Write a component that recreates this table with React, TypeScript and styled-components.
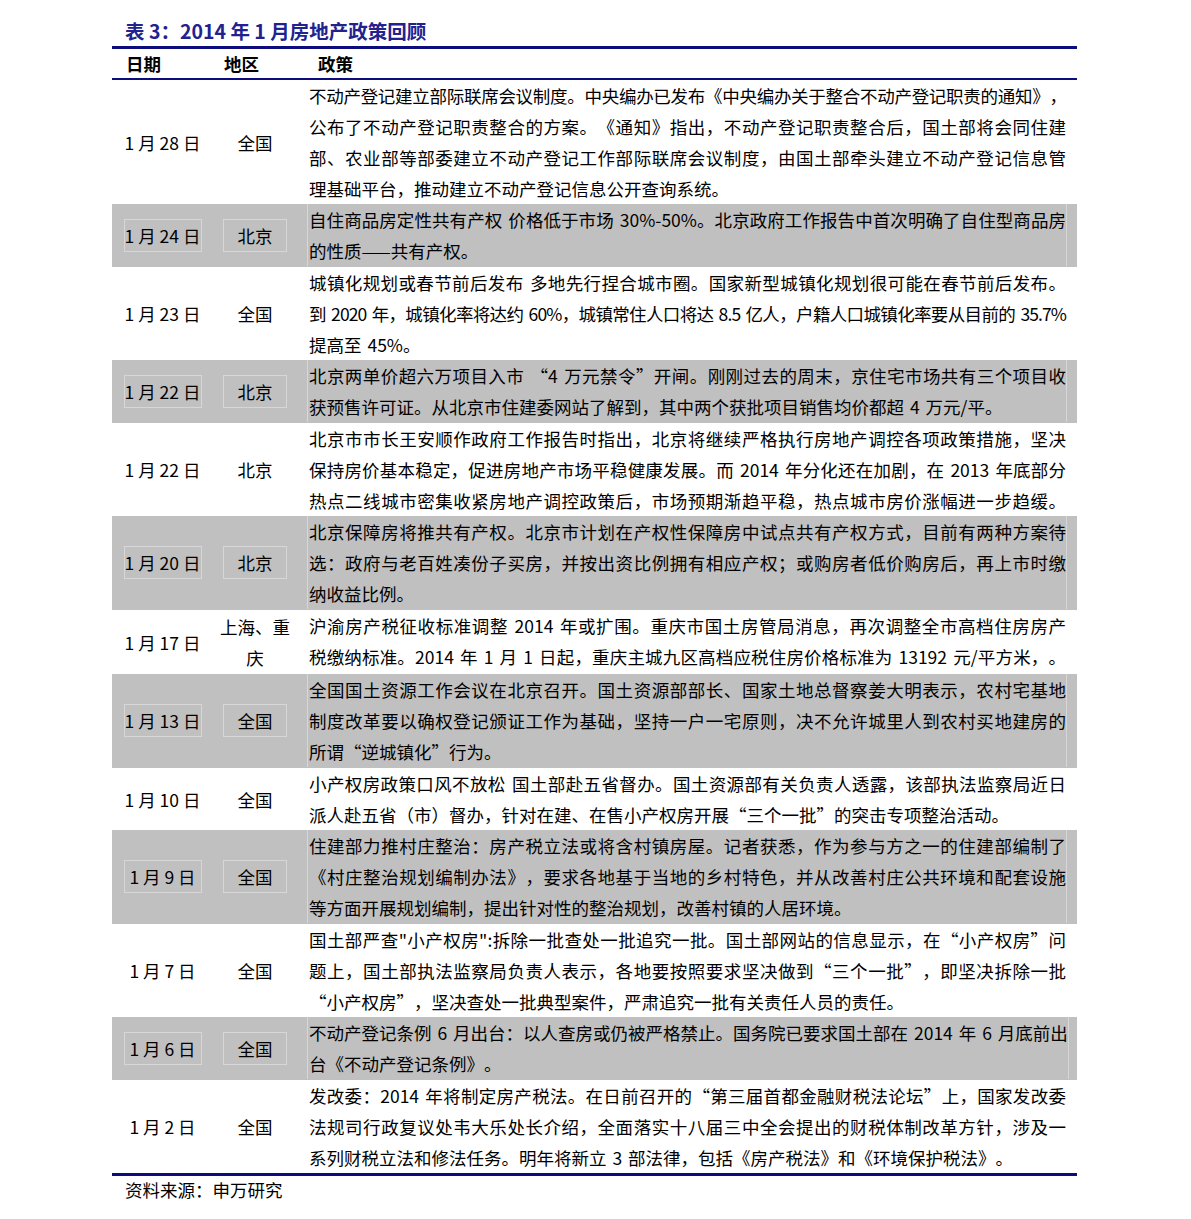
import React from 'react';
import styled, { createGlobalStyle, css } from 'styled-components';

type PolicyLine = { text: string; last?: boolean; tight?: boolean };
type Row = { date: string; region: React.ReactNode; shade?: boolean; lines: PolicyLine[] };

const navy = '#0c0c7c';

const rows: Row[] = [
  {
    date: '1 月 28 日',
    region: '全国',
    lines: [
      { text: '不动产登记建立部际联席会议制度。中央编办已发布《中央编办关于整合不动产登记职责的通知》，', tight: true },
      { text: '公布了不动产登记职责整合的方案。《通知》指出，不动产登记职责整合后，国土部将会同住建' },
      { text: '部、农业部等部委建立不动产登记工作部际联席会议制度，由国土部牵头建立不动产登记信息管' },
      { text: '理基础平台，推动建立不动产登记信息公开查询系统。', last: true },
    ],
  },
  {
    date: '1 月 24 日',
    region: '北京',
    shade: true,
    lines: [
      { text: '自住商品房定性共有产权 价格低于市场 30%-50%。北京政府工作报告中首次明确了自住型商品房' },
      { text: '的性质——共有产权。', last: true },
    ],
  },
  {
    date: '1 月 23 日',
    region: '全国',
    lines: [
      { text: '城镇化规划或春节前后发布 多地先行捏合城市圈。国家新型城镇化规划很可能在春节前后发布。' },
      { text: '到 2020 年，城镇化率将达约 60%，城镇常住人口将达 8.5 亿人，户籍人口城镇化率要从目前的 35.7%', tight: true },
      { text: '提高至 45%。', last: true },
    ],
  },
  {
    date: '1 月 22 日',
    region: '北京',
    shade: true,
    lines: [
      { text: '北京两单价超六万项目入市 “4 万元禁令”开闸。刚刚过去的周末，京住宅市场共有三个项目收' },
      { text: '获预售许可证。从北京市住建委网站了解到，其中两个获批项目销售均价都超 4 万元/平。', last: true },
    ],
  },
  {
    date: '1 月 22 日',
    region: '北京',
    lines: [
      { text: '北京市市长王安顺作政府工作报告时指出，北京将继续严格执行房地产调控各项政策措施，坚决' },
      { text: '保持房价基本稳定，促进房地产市场平稳健康发展。而 2014 年分化还在加剧，在 2013 年底部分' },
      { text: '热点二线城市密集收紧房地产调控政策后，市场预期渐趋平稳，热点城市房价涨幅进一步趋缓。' },
    ],
  },
  {
    date: '1 月 20 日',
    region: '北京',
    shade: true,
    lines: [
      { text: '北京保障房将推共有产权。北京市计划在产权性保障房中试点共有产权方式，目前有两种方案待' },
      { text: '选：政府与老百姓凑份子买房，并按出资比例拥有相应产权；或购房者低价购房后，再上市时缴' },
      { text: '纳收益比例。', last: true },
    ],
  },
  {
    date: '1 月 17 日',
    region: (
      <>
        上海、重
        <br />
        庆
      </>
    ),
    lines: [
      { text: '沪渝房产税征收标准调整 2014 年或扩围。重庆市国土房管局消息，再次调整全市高档住房房产' },
      { text: '税缴纳标准。2014 年 1 月 1 日起，重庆主城九区高档应税住房价格标准为 13192 元/平方米，。' },
    ],
  },
  {
    date: '1 月 13 日',
    region: '全国',
    shade: true,
    lines: [
      { text: '全国国土资源工作会议在北京召开。国土资源部部长、国家土地总督察姜大明表示，农村宅基地' },
      { text: '制度改革要以确权登记颁证工作为基础，坚持一户一宅原则，决不允许城里人到农村买地建房的' },
      { text: '所谓“逆城镇化”行为。', last: true },
    ],
  },
  {
    date: '1 月 10 日',
    region: '全国',
    lines: [
      { text: '小产权房政策口风不放松 国土部赴五省督办。国土资源部有关负责人透露，该部执法监察局近日' },
      { text: '派人赴五省（市）督办，针对在建、在售小产权房开展“三个一批”的突击专项整治活动。', last: true },
    ],
  },
  {
    date: '1 月 9 日',
    region: '全国',
    shade: true,
    lines: [
      { text: '住建部力推村庄整治：房产税立法或将含村镇房屋。记者获悉，作为参与方之一的住建部编制了' },
      { text: '《村庄整治规划编制办法》，要求各地基于当地的乡村特色，并从改善村庄公共环境和配套设施' },
      { text: '等方面开展规划编制，提出针对性的整治规划，改善村镇的人居环境。', last: true },
    ],
  },
  {
    date: '1 月 7 日',
    region: '全国',
    lines: [
      { text: '国土部严查"小产权房":拆除一批查处一批追究一批。国土部网站的信息显示，在“小产权房”问' },
      { text: '题上，国土部执法监察局负责人表示，各地要按照要求坚决做到“三个一批”，即坚决拆除一批' },
      { text: '“小产权房”，坚决查处一批典型案件，严肃追究一批有关责任人员的责任。', last: true },
    ],
  },
  {
    date: '1 月 6 日',
    region: '全国',
    shade: true,
    lines: [
      { text: '不动产登记条例 6 月出台：以人查房或仍被严格禁止。国务院已要求国土部在 2014 年 6 月底前出' },
      { text: '台《不动产登记条例》。', last: true },
    ],
  },
  {
    date: '1 月 2 日',
    region: '全国',
    lines: [
      { text: '发改委：2014 年将制定房产税法。在日前召开的“第三届首都金融财税法论坛”上，国家发改委' },
      { text: '法规司行政复议处韦大乐处长介绍，全面落实十八届三中全会提出的财税体制改革方针，涉及一' },
      { text: '系列财税立法和修法任务。明年将新立 3 部法律，包括《房产税法》和《环境保护税法》。', last: true },
    ],
  },
];

const GlobalStyle = createGlobalStyle`
  body {
    margin: 0;
    background: #fff;
    color: #000;
    font-family: "Noto Sans CJK SC", "Liberation Sans", sans-serif;
    text-spacing-trim: space-all;
  }
`;

const Page = styled.div`
  width: 965px;
  padding: 15px 0 20px 112px;
`;

const Title = styled.h1`
  margin: 0;
  padding-left: 13px;
  height: 31px;
  line-height: 31px;
  font-size: 19.5px;
  font-weight: 700;
  color: #22228f;
`;

const Table = styled.div`
  border-top: 3px solid ${navy};
  border-bottom: 3px solid ${navy};
  font-size: 17.5px;
`;

const Columns = css`
  display: grid;
  grid-template-columns: 101px 94px 1fr;
`;

const HeaderRow = styled.div`
  ${Columns};
  height: 29px;
  line-height: 29px;
  font-weight: 700;
  border-bottom: 2px solid ${navy};
`;

const HeaderCell = styled.div<{ $indent: number }>`
  padding-left: ${({ $indent }) => $indent}px;
`;

const BodyRow = styled.div<{ $shade?: boolean }>`
  ${Columns};
  background: ${({ $shade }) => ($shade ? '#c0c0c0' : 'transparent')};
  padding-bottom: ${({ $shade }) => ($shade ? 1 : 0)}px;
`;

const LabelCell = styled.div<{ $gutter?: number }>`
  display: flex;
  align-items: center;
  justify-content: center;
  padding-right: ${({ $gutter }) => $gutter || 0}px;
`;

const Label = styled.div<{ $boxed?: boolean; $width: number }>`
  line-height: 31px;
  text-align: center;
  white-space: nowrap;
  border: 1px solid transparent;
  ${({ $boxed, $width }) =>
    $boxed &&
    css`
      width: ${$width - 2}px;
      border-color: #d7d7d7;
    `}
`;

const PolicyCell = styled.div`
  display: flex;
  padding-right: 10px;
`;

const PolicyBox = styled.div<{ $shade?: boolean }>`
  flex: 1;
  padding-left: 1px;
  border-left: 1px solid ${({ $shade }) => ($shade ? '#d7d7d7' : 'transparent')};
  border-right: 1px solid ${({ $shade }) => ($shade ? '#d7d7d7' : 'transparent')};
`;

const Line = styled.div<{ $last?: boolean; $tight?: boolean }>`
  line-height: 31px;
  white-space: nowrap;
  word-spacing: 2px;
  text-align: justify;
  text-align-last: ${({ $last }) => ($last ? 'left' : 'justify')};
  letter-spacing: ${({ $tight }) => ($tight ? '-0.9px' : 'normal')};
`;

const Source = styled.div`
  padding-left: 13px;
  line-height: 28px;
  font-size: 17.5px;
`;

export default function App() {
  return (
    <>
      <GlobalStyle />
      <Page>
        <Title>表 3：2014 年 1 月房地产政策回顾</Title>
        <Table>
          <HeaderRow>
            <HeaderCell $indent={14}>日期</HeaderCell>
            <HeaderCell $indent={11}>地区</HeaderCell>
            <HeaderCell $indent={11}>政策</HeaderCell>
          </HeaderRow>
          {rows.map((row, i) => (
            <BodyRow key={i} $shade={row.shade}>
              <LabelCell>
                <Label $boxed={row.shade} $width={78}>
                  {row.date}
                </Label>
              </LabelCell>
              <LabelCell $gutter={10}>
                <Label $boxed={row.shade} $width={64}>
                  {row.region}
                </Label>
              </LabelCell>
              <PolicyCell>
                <PolicyBox $shade={row.shade}>
                  {row.lines.map((line, j) => (
                    <Line key={j} $last={line.last} $tight={line.tight}>
                      {line.text}
                    </Line>
                  ))}
                </PolicyBox>
              </PolicyCell>
            </BodyRow>
          ))}
        </Table>
        <Source>资料来源：申万研究</Source>
      </Page>
    </>
  );
}
